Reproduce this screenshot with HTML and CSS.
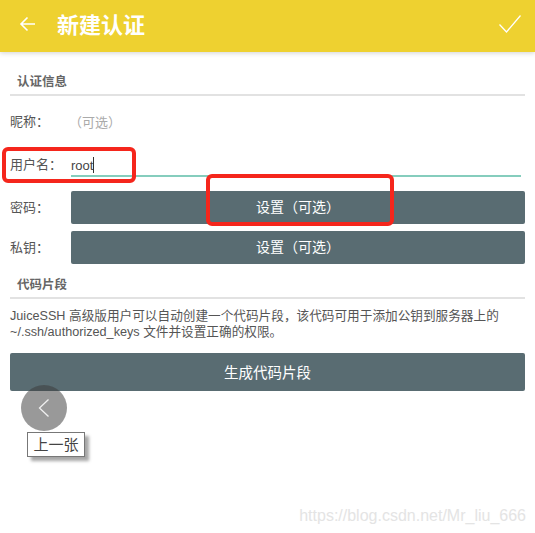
FILE: index.html
```html
<!DOCTYPE html>
<html lang="zh">
<head>
  <meta charset="UTF-8" />
  <title>新建认证</title>
  <link rel="stylesheet" href="styles.css">
</head>
<body>

  <header class="toolbar">
    <svg class="back-icon" width="18" height="16" viewBox="0 0 18 16">
      <path d="M16 8H2M8.5 1.5L2 8l6.5 6.5" fill="none" stroke="#fff" stroke-width="1.6"/>
    </svg>
    <h1>新建认证</h1>
    <svg class="ok-icon" width="24" height="20" viewBox="0 0 24 20">
      <path d="M1.5 10.5l7 7.5L22.5 1.5" fill="none" stroke="#fff" stroke-width="1.3"/>
    </svg>
  </header>

  <main class="content">
    <h2 class="section-title first">认证信息</h2>

    <div class="row nick-row">
      <span class="label">昵称：</span>
      <span class="hint">（可选）</span>
    </div>

    <div class="row user-row">
      <span class="label">用户名：</span>
      <div class="user-input"><span>root</span><i class="caret"></i></div>
    </div>

    <div class="row btn-row">
      <span class="label">密码：</span>
      <button class="btn">设置（可选）</button>
    </div>

    <div class="row btn-row second">
      <span class="label">私钥：</span>
      <button class="btn">设置（可选）</button>
    </div>

    <h2 class="section-title snippet">代码片段</h2>

    <p class="desc">JuiceSSH 高级版用户可以自动创建一个代码片段，该代码可用于添加公钥到服务器上的<br>~/.ssh/authorized_keys 文件并设置正确的权限。</p>

    <button class="btn wide">生成代码片段</button>
  </main>

  <!-- red marks drawn on top of the screenshot -->
  <div class="mark mark-user"></div>
  <div class="mark mark-btn"></div>

  <div class="prev-circle">
    <svg width="12" height="20" viewBox="0 0 12 20">
      <path d="M10.5 1.5L1.5 10l9 8.5" fill="none" stroke="#f0f0f0" stroke-width="1.3"/>
    </svg>
  </div>
  <div class="prev-tip">上一张</div>

  <div class="watermark">https://blog.csdn.net/Mr_liu_666</div>

</body>
</html>
```

FILE: styles.css
```css
body {
  margin: 0;
  height: 533px;
  position: relative;
  overflow: hidden;
  background-color: #fff;
  font-family: "Liberation Sans", "Noto Sans CJK SC", sans-serif;
  color: #555;
}
.toolbar {
  height: 52px;
  background-color: #eed130;
  box-shadow: 0 1px 5px rgba(0,0,0,0.18);
  display: flex;
  align-items: center;
  padding: 0 13px 4px 19px;
  box-sizing: border-box;
}
.toolbar h1 {
  margin: 0 0 3px 20px;
  flex: 1;
  font-size: 22px;
  font-weight: 700;
  color: #fff;
}
.content {
  padding: 0 10px;
}
.section-title {
  margin: 0;
  padding: 0 0 3px 7px;
  font-size: 12.5px;
  line-height: 18px;
  font-weight: 700;
  color: #666;
  border-bottom: 2px solid #e2e2e2;
}
.section-title.first {
  margin-top: 21px;
}
.section-title.snippet {
  margin-top: 12px;
}
.row {
  display: flex;
  align-items: center;
}
.label {
  width: 61px;
  flex: none;
  font-size: 13px;
  line-height: 20px;
  color: #555;
}
.nick-row {
  margin-top: 16px;
  height: 20px;
}
.hint {
  margin: -2px 0 0 -2px;
  font-size: 13px;
  color: #aaa;
}
.user-row {
  margin-top: 23px;
  height: 22px;
  align-items: flex-start;
}
.user-input {
  flex: 1;
  height: 20px;
  display: flex;
  align-items: center;
  font-size: 13px;
  color: #444;
  border-bottom: 2px solid #85cdbd;
  margin-right: 4px;
}
.caret {
  width: 1px;
  height: 16px;
  background-color: #333;
}
.btn-row {
  height: 33px;
}
.user-row + .btn-row {
  margin-top: 14px;
}
.btn-row.second {
  margin-top: 7px;
}
.btn {
  flex: 1;
  height: 33px;
  padding: 0 0 4px;
  border: none;
  border-radius: 2px;
  background-color: #596c72;
  color: #fff;
  font-family: inherit;
  font-size: 14px;
}
.btn.wide {
  display: block;
  width: 100%;
  height: 38px;
  margin-top: 13px;
  padding: 0 0 2px;
  font-size: 14.5px;
}
.desc {
  margin: 9px 0 0;
  font-size: 12.65px;
  line-height: 16px;
  color: #555;
}
.mark {
  position: absolute;
  border: 4px solid #f5261c;
  border-radius: 6px;
  box-sizing: border-box;
}
.mark-user {
  left: 2px;
  top: 147px;
  width: 134px;
  height: 36px;
}
.mark-btn {
  left: 206px;
  top: 174px;
  width: 188px;
  height: 52px;
}
.prev-circle {
  position: absolute;
  left: 21px;
  top: 385px;
  width: 46px;
  height: 46px;
  border-radius: 50%;
  background-color: rgba(60,60,60,0.52);
  display: flex;
  align-items: center;
  justify-content: center;
}
.prev-tip {
  position: absolute;
  left: 27px;
  top: 432px;
  width: 58px;
  height: 25px;
  box-sizing: border-box;
  border: 1px solid #777;
  background-color: #fff;
  box-shadow: 4px 4px 3px rgba(0,0,0,0.35);
  font-size: 15px;
  line-height: 23px;
  text-align: center;
  color: #444;
}
.watermark {
  position: absolute;
  right: 9px;
  top: 507px;
  font-size: 16px;
  color: #e4e4e4;
  white-space: nowrap;
}
```
